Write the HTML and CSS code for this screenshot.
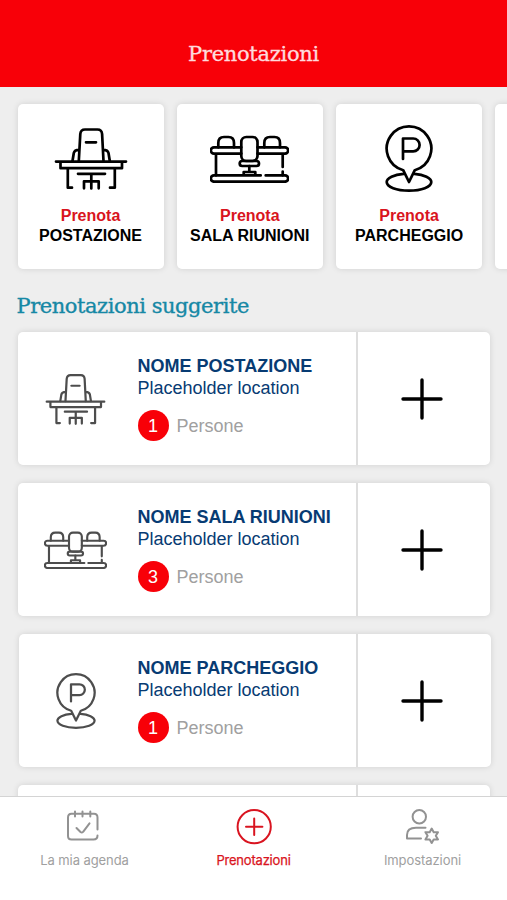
FILE: index.html
```
<!doctype html>
<html lang="it">
	<head>
		<meta charset="utf-8" />
		<title>Prenotazioni</title>
		<link rel="stylesheet" href="styles.css">
	</head>

	<body>
		<!-- shared icons -->
		<svg class="sprite">
			<symbol id="desk" viewBox="-1.5 0 74 62">
				<path d="M23.3 33 24.8 6Q25.2 1.5 29.5 1.5H42Q46.2 1.5 46.6 6L48 33M30.5 14.3H40.5M17 33 18.3 25Q19 21.8 23.5 21.8M54.3 33 53 25Q52.3 21.8 47.8 21.8" />
				<path d="M.5 33.6H70.5M5 34V40.2H66.5V34M12.3 40.5V59.7H16.5M59.3 40.5V59.7H54.5M22.5 45.8H49.5M35.8 46V60.5M28.5 60.3V53.3H43.2V60.3" />
			</symbol>
			<symbol id="meeting" viewBox="0 0 79 48">
				<path d="M8.3 12.3V8Q8.3 2 14 2H18.5Q24 2 24 8V12.3M54.3 12.3V8Q54.3 2 60 2H64.5Q70 2 70 8V12.3" />
				<path d="M31.3 12.3H4A3.1 3.1 0 0 0 4 18.6H31.3M47.5 12.3H75A3.1 3.1 0 0 1 75 18.6H47.5M6 18.6V40.3M72.7 18.6V32M72.7 36.5V40.3" />
				<rect x="31.3" y="2" width="16.2" height="24" rx="5" />
				<rect x="29.7" y="26" width="19.3" height="5" rx="2.5" />
				<path d="M39.3 31V37M33.7 40V37H45.3V40M50.7 40.4H4A3.1 3.1 0 0 0 4 46.7H75A3.1 3.1 0 0 0 75 40.4H55.7" />
			</symbol>
			<symbol id="parking" viewBox="0 0 48 67">
				<path d="M18.2 45.2A22.3 22.3 0 1 1 29.8 45.2L24 57 18.2 45.2ZM18.5 48.9C9 49.5 1.7 53 1.7 57 1.7 62 11.5 65.6 24 65.6S46.3 62 46.3 57C46.3 53 39 49.5 29.5 48.9" />
				<path d="M18 34V13.5H28.2A6.4 6.4 0 0 1 28.2 26.3H18" />
			</symbol>
		</svg>

		<header class="header">
			<h1>Prenotazioni</h1>
		</header>

		<main class="content">
			<div class="shortcuts">
				<a class="shortcut">
					<svg class="desk"><use href="#desk" /></svg>
					<span>Prenota</span>
					<b>POSTAZIONE</b>
				</a>
				<a class="shortcut">
					<svg class="meeting"><use href="#meeting" /></svg>
					<span>Prenota</span>
					<b>SALA RIUNIONI</b>
				</a>
				<a class="shortcut">
					<svg class="parking"><use href="#parking" /></svg>
					<span>Prenota</span>
					<b>PARCHEGGIO</b>
				</a>
				<a class="shortcut"></a>
			</div>

			<h2>Prenotazioni suggerite</h2>

			<div class="bookings">
				<div class="booking">
					<div class="picture"><svg class="desk"><use href="#desk" /></svg></div>
					<div class="details">
						<h3>NOME POSTAZIONE</h3>
						<p>Placeholder location</p>
						<div class="people"><span class="count">1</span> Persone</div>
					</div>
					<div class="add"><svg viewBox="0 0 42 42"><path d="M2 21H40M21 2V40" /></svg></div>
				</div>
				<div class="booking">
					<div class="picture"><svg class="meeting"><use href="#meeting" /></svg></div>
					<div class="details">
						<h3>NOME SALA RIUNIONI</h3>
						<p>Placeholder location</p>
						<div class="people"><span class="count">3</span> Persone</div>
					</div>
					<div class="add"><svg viewBox="0 0 42 42"><path d="M2 21H40M21 2V40" /></svg></div>
				</div>
				<div class="booking shifted">
					<div class="picture"><svg class="parking"><use href="#parking" /></svg></div>
					<div class="details">
						<h3>NOME PARCHEGGIO</h3>
						<p>Placeholder location</p>
						<div class="people"><span class="count">1</span> Persone</div>
					</div>
					<div class="add"><svg viewBox="0 0 42 42"><path d="M2 21H40M21 2V40" /></svg></div>
				</div>
				<div class="booking">
					<div class="picture"></div>
					<div class="details"></div>
					<div class="add"></div>
				</div>
			</div>
		</main>

		<nav class="tabs">
			<a class="tab">
				<svg viewBox="0 0 36 36">
					<path d="M30.5 20.5V8.5Q30.5 4.8 27 4.8H4.5Q1 4.8 1 8.5V27Q1 30.5 4.5 30.5H26.5Q30.5 30.5 30.5 26.5M8 2.5V7.5M15.5 2.5V7.5M23.3 2.5V7.5M9.5 19 13.5 23Q15 24.3 16.3 22.7L22.5 14.3" />
				</svg>
				<span>La mia agenda</span>
			</a>
			<a class="tab active">
				<svg viewBox="0 0 36 36">
					<circle cx="18.2" cy="17.7" r="16.6" />
					<path d="M10 17.7H26.4M18.2 9.5V25.9" />
				</svg>
				<span>Prenotazioni</span>
			</a>
			<a class="tab">
				<svg viewBox="0 0 36 36">
					<circle cx="14.3" cy="7.8" r="6.7" />
					<path d="M20.5 18.8H11Q2 18.8 2 26V29.5H16" />
					<path d="M26.7 19.6 28.7 23.2 33 23.2 30.8 26.8 33 30.4 28.7 30.4 26.7 34 24.7 30.4 20.4 30.4 22.6 26.8 20.4 23.2 24.7 23.2Z" />
				</svg>
				<span>Impostazioni</span>
			</a>
		</nav>
	</body>
</html>
```

FILE: styles.css
```
:root {
	--red: #f80008;
	--red-dark: #d91420;
	--blue: #073b73;
	--teal: #1688a5;
	--gray-100: #eeeeee;
	--gray-300: #dedede;
	--gray-500: #a0a0a0;
	--gray-700: #4d4d4d;
}

* {
	box-sizing: border-box;
}

body {
	display: flex;
	flex-direction: column;
	height: 900px;
	margin: 0;
	overflow: hidden;
	background-color: var(--gray-100);
	font-family: "Liberation Sans", Arial, sans-serif;
}

h1,
h2,
h3,
p {
	margin: 0;
}

svg {
	fill: none;
	stroke: currentColor;
	stroke-width: 2.7;
	stroke-linecap: round;
	stroke-linejoin: round;
}

.sprite {
	position: absolute;
	width: 0;
	height: 0;
}

.header {
	flex: none;
	height: 86.5px;
	padding-top: 39px;
	background-color: var(--red);
	color: #ffdadd;
	text-align: center;
}

h1,
h2 {
	font-family: "DejaVu Serif", serif;
	font-weight: 400;
	white-space: nowrap;
	-webkit-text-stroke: 0.35px;
}

h1 {
	font-size: 21px;
	line-height: 30px;
	letter-spacing: -0.3px;
}

.content {
	flex: 1;
	min-height: 0;
	overflow: hidden;
	padding: 17.5px 0 0 17.5px;
}

.shortcuts {
	display: flex;
	gap: 13.3px;
}

.shortcut {
	display: flex;
	flex: none;
	flex-direction: column;
	align-items: center;
	width: 146px;
	height: 165px;
	padding-top: 7px;
	background-color: #fff;
	border-radius: 5px;
	box-shadow: 0 0 6px rgba(0, 0, 0, 0.12);
	font-size: 16px;
	line-height: 20px;
}

.shortcut svg {
	margin: auto 0;
}

.shortcut span {
	color: var(--red-dark);
	font-weight: 700;
}

.shortcut b {
	margin-bottom: 23px;
}

.shortcut .desk {
	width: 74px;
	height: 62px;
}

.shortcut .meeting {
	width: 79px;
	height: 48px;
}

.shortcut .parking {
	width: 48px;
	height: 67px;
}

h2 {
	margin: 22px 0 11px -1px;
	color: var(--teal);
	font-size: 21px;
	line-height: 30px;
	letter-spacing: -0.45px;
}

.bookings {
	display: flex;
	flex-direction: column;
	gap: 18px;
}

.booking {
	display: flex;
	flex: none;
	width: 472px;
	height: 133px;
	background-color: #fff;
	border-radius: 5px;
	box-shadow: 0 0 6px rgba(0, 0, 0, 0.12);
}

.picture {
	display: flex;
	justify-content: center;
	align-items: center;
	width: 120px;
	padding-right: 4px;
	padding-top: 1px;
	color: var(--gray-700);
}

.picture .desk {
	width: 61px;
	height: 51px;
}

.picture .meeting {
	width: 63px;
	height: 38px;
}

.picture .parking {
	width: 40px;
	height: 56px;
}

.details {
	width: 218px;
	padding-top: 23px;
	color: var(--blue);
	font-size: 18px;
	line-height: 22px;
}

.details h3 {
	font-size: 18px;
}

.people {
	display: flex;
	align-items: center;
	gap: 8px;
	margin-top: 11px;
	color: var(--gray-500);
}

.count {
	display: flex;
	justify-content: center;
	align-items: center;
	width: 31px;
	height: 31px;
	border-radius: 50%;
	background-color: var(--red);
	color: #fff;
}

.add {
	display: flex;
	flex: 1;
	justify-content: center;
	align-items: center;
	padding-right: 3px;
	border-left: 2px solid var(--gray-300);
}

.add svg {
	width: 42px;
	height: 42px;
	stroke-width: 3.4;
}

/* third card sits slightly to the right */
.shifted {
	margin-left: 1.5px;
}

.shifted .picture {
	width: 118.5px;
}

.shifted .add {
	padding-right: 5px;
}

.tabs {
	display: flex;
	flex: none;
	height: 104px;
	border-top: 1px solid #d4d4d4;
	background-color: #fff;
}

.tab {
	display: flex;
	flex: 1;
	flex-direction: column;
	align-items: center;
	padding-top: 12px;
	color: var(--gray-500);
	font-family: Inter, sans-serif;
	font-size: 13px;
	line-height: 18px;
	letter-spacing: -0.07px;
}

.tab svg {
	width: 36px;
	height: 36px;
	margin-bottom: 6px;
	stroke-width: 2;
	color: #929292;
}

.active,
.active svg {
	color: var(--red-dark);
}

.active span {
	letter-spacing: -0.2px;
	-webkit-text-stroke: 0.25px;
}
```
